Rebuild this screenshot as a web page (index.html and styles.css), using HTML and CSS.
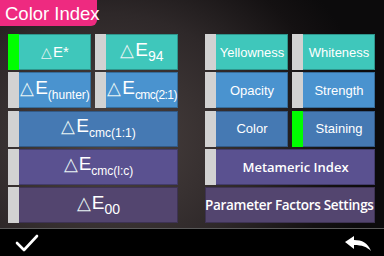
FILE: index.html
```html
<!DOCTYPE html>
<html lang="en">
<head>
    <meta charset="UTF-8">
    <title>Color Index</title>
    <link rel="stylesheet" href="styles.css">
</head>
<body>
    <div class="screen">
        <header>
            <div class="title-tab">Color Index</div>
        </header>
        <div class="panel">
            <div class="column">
                <div class="btn teal active"><span class="de"><span class="tri">△</span>E*</span></div>
                <div class="btn teal"><span class="de big"><span class="tri">△</span>E<sub>94</sub></span></div>
                <div class="btn blue"><span class="de big"><span class="tri">△</span>E<sub class="small">(hunter)</sub></span></div>
                <div class="btn blue"><span class="de big"><span class="tri">△</span>E<sub class="small tight">cmc(2:1)</sub></span></div>
                <div class="btn dblue wide"><span class="de big"><span class="tri">△</span>E<sub class="small">cmc(1:1)</sub></span></div>
                <div class="btn purple wide"><span class="de big"><span class="tri">△</span>E<sub class="small">cmc(l:c)</sub></span></div>
                <div class="btn dpurple wide"><span class="de big"><span class="tri">△</span>E<sub>00</sub></span></div>
            </div>
            <div class="column">
                <div class="btn teal label">Yellowness</div>
                <div class="btn teal label">Whiteness</div>
                <div class="btn blue label">Opacity</div>
                <div class="btn blue label">Strength</div>
                <div class="btn dblue label">Color</div>
                <div class="btn dblue label active">Staining</div>
                <div class="btn purple wide label bold">Metameric Index</div>
                <div class="btn dpurple wide label bold nobar">Parameter Factors Settings</div>
            </div>
        </div>
        <footer>
            <svg class="icon-ok" width="24" height="20" viewBox="0 0 24 20">
                <path d="M2 10 L9 17 L22 3" fill="none" stroke="#fff" stroke-width="2.6" stroke-linecap="round" stroke-linejoin="round"/>
            </svg>
            <svg class="icon-back" width="28" height="16" viewBox="0 0 28 16">
                <path d="M1 6 L10 0 L10 4 C18 4 24 7 27 15 C23 11 18 9 10 9 L10 13 Z" fill="#fff"/>
            </svg>
        </footer>
    </div>
</body>
</html>
```

FILE: styles.css
```css
body {
    margin: 0;
    padding: 0;
    font-family: "Liberation Sans", Arial, sans-serif;
    background: #000;
}
.screen {
    width: 384px;
    height: 256px;
    overflow: hidden;
    display: flex;
    flex-direction: column;
    background: radial-gradient(ellipse 70% 90% at 28% 55%, #4c4341 0%, #2e2829 55%, #141112 85%, #0c0b0c 100%);
}
header {
    height: 34px;
}
.title-tab {
    display: inline-block;
    height: 26px;
    width: 92px;
    padding-left: 5px;
    background-color: #ee2a80;
    color: #fff;
    font-size: 18.5px;
    line-height: 27px;
    white-space: nowrap;
    border-bottom-right-radius: 6px;
}
.panel {
    display: grid;
    grid-template-columns: 170px 170px;
    column-gap: 27px;
    padding: 0 8px;
    height: 194px;
}
.column {
    display: grid;
    grid-template-columns: 83px 83px;
    grid-auto-rows: 36px;
    column-gap: 4px;
    row-gap: 2.25px;
}
.btn {
    position: relative;
    display: flex;
    align-items: center;
    justify-content: center;
    padding-left: 11px;
    color: #fff;
    box-shadow: inset 0 0 0 1px rgba(0, 0, 0, 0.25);
}
.btn::before {
    content: "";
    position: absolute;
    left: 0;
    top: 0;
    bottom: 0;
    width: 11px;
    background-color: #d2d2d2;
}
.btn.active::before {
    background-color: #00ff00;
}
.btn.nobar::before {
    display: none;
}
.btn.nobar {
    padding-left: 0;
}
.wide {
    grid-column: span 2;
}
.teal { background-color: #3fc7bb; }
.blue { background-color: #4a93cf; }
.dblue { background-color: #4579b3; }
.purple { background-color: #5a5190; }
.dpurple { background-color: #53456f; }
.de {
    font-size: 15px;
    white-space: nowrap;
    margin-top: -2px;
}
.de.big {
    font-size: 19px;
}
.tri {
    font-family: "DejaVu Sans", sans-serif;
    font-weight: 200;
    font-size: 0.95em;
    margin-right: 1px;
    color: #e8f4f4;
}
.de sub {
    font-size: 14px;
    vertical-align: -5px;
}
.de sub.small {
    font-size: 12px;
}
.de sub.tight {
    letter-spacing: -0.6px;
}
.label {
    font-size: 13px;
    white-space: nowrap;
}
.label.bold {
    font-family: "Open Sans", sans-serif;
    font-weight: 600;
    font-size: 13px;
}
.label.nobar {
    font-size: 13.5px;
    letter-spacing: -0.3px;
    justify-content: flex-start;
}
footer {
    flex: 1;
    display: flex;
    justify-content: space-between;
    align-items: center;
    background-color: #000;
    border-top: 1px solid #5a5a5a;
    padding: 0 12px 0 15px;
}
.icon-back {
    margin-top: 2px;
}
```
